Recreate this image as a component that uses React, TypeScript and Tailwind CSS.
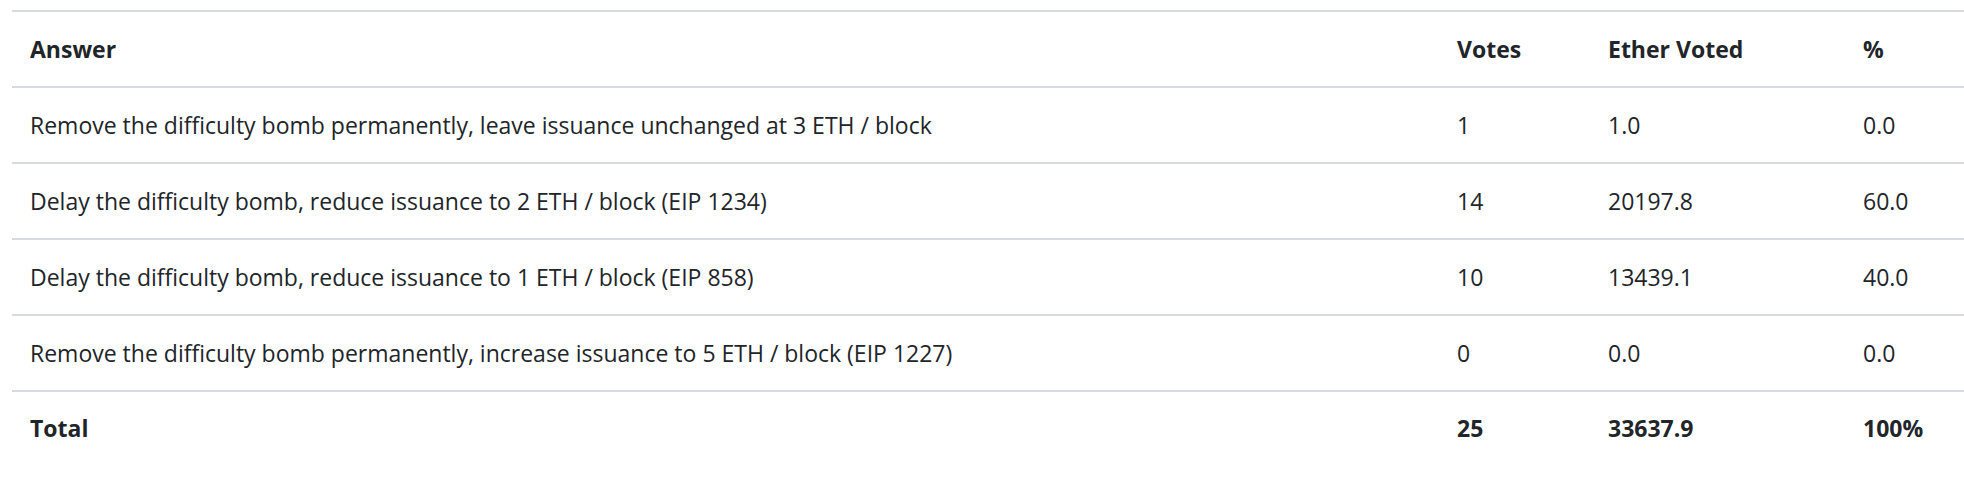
import React from "react";

const rows = [
  { answer: "Remove the difficulty bomb permanently, leave issuance unchanged at 3 ETH / block", votes: "1", ether: "1.0", pct: "0.0" },
  { answer: "Delay the difficulty bomb, reduce issuance to 2 ETH / block (EIP 1234)", votes: "14", ether: "20197.8", pct: "60.0" },
  { answer: "Delay the difficulty bomb, reduce issuance to 1 ETH / block (EIP 858)", votes: "10", ether: "13439.1", pct: "40.0" },
  { answer: "Remove the difficulty bomb permanently, increase issuance to 5 ETH / block (EIP 1227)", votes: "0", ether: "0.0", pct: "0.0" },
];

export default function App() {
  return (
    <div className="w-[1964px] h-[480px] bg-white pt-[10px] pl-[12px] overflow-hidden font-['Open_Sans',sans-serif] text-[#212529] text-[23px]">
      <table className="w-[1952px] border-collapse table-fixed">
        <colgroup>
          <col className="w-[1427px]" />
          <col className="w-[151px]" />
          <col className="w-[255px]" />
          <col />
        </colgroup>
        <thead>
          <tr className="h-[76px] border-t-2 border-b-2 border-[#d7dbdf]">
            <th className="text-left font-bold px-[18px]">Answer</th>
            <th className="text-left font-bold px-[18px]">Votes</th>
            <th className="text-left font-bold px-[18px]">Ether Voted</th>
            <th className="text-left font-bold px-[18px]">%</th>
          </tr>
        </thead>
        <tbody>
          {rows.map((r, i) => (
            <tr key={i} className="h-[76px] border-b-2 border-[#d7dbdf]">
              <td className="px-[18px]">{r.answer}</td>
              <td className="px-[18px]">{r.votes}</td>
              <td className="px-[18px]">{r.ether}</td>
              <td className="px-[18px]">{r.pct}</td>
            </tr>
          ))}
          <tr className="h-[74px] font-bold">
            <td className="px-[18px]">Total</td>
            <td className="px-[18px]">25</td>
            <td className="px-[18px]">33637.9</td>
            <td className="px-[18px]">100%</td>
          </tr>
        </tbody>
      </table>
    </div>
  );
}
